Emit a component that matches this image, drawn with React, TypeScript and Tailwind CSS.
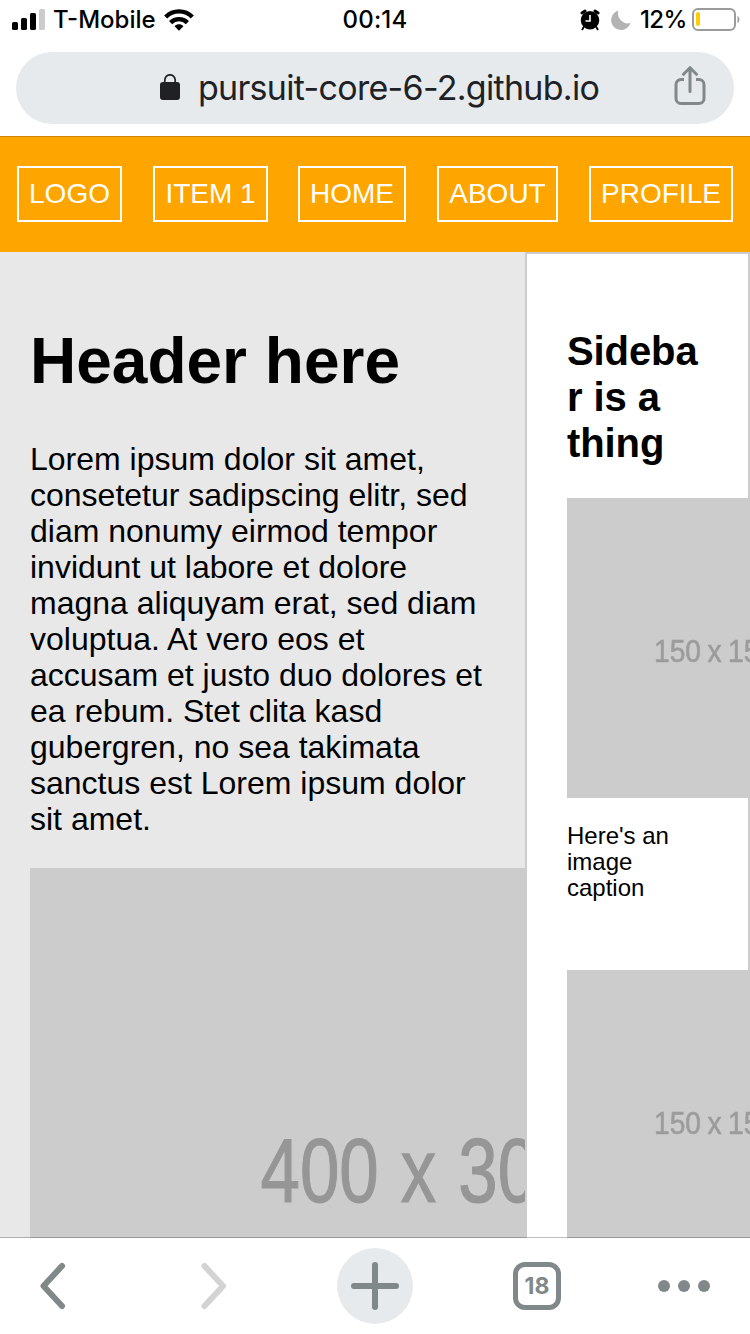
import React from "react";

const NAV_ITEMS = [
  { label: "LOGO", width: "w-[105px]", gap: "" },
  { label: "ITEM 1", width: "w-[115px]", gap: "ml-[31px]" },
  { label: "HOME", width: "w-[108px]", gap: "ml-[30px]" },
  { label: "ABOUT", width: "w-[121px]", gap: "ml-[31px]" },
  { label: "PROFILE", width: "w-[144px]", gap: "ml-[31px]" },
];

const PARAGRAPH = [
  "Lorem ipsum dolor sit amet,",
  "consetetur sadipscing elitr, sed",
  "diam nonumy eirmod tempor",
  "invidunt ut labore et dolore",
  "magna aliquyam erat, sed diam",
  "voluptua. At vero eos et",
  "accusam et justo duo dolores et",
  "ea rebum. Stet clita kasd",
  "gubergren, no sea takimata",
  "sanctus est Lorem ipsum dolor",
  "sit amet.",
];

function StatusBar() {
  return (
    <div className="grid h-10 grid-cols-[1fr_auto_1fr] items-center pl-3 pr-[10px] text-[24px] leading-10 font-medium text-black">
      <div className="flex items-center">
        <svg width="34" height="22" viewBox="0 0 34 22" className="shrink-0">
          <rect x="0" y="13" width="6" height="8" rx="1.6" />
          <rect x="9" y="9" width="6" height="12" rx="1.6" />
          <rect x="18" y="4" width="6" height="17" rx="1.6" />
          <rect x="27" y="0" width="6" height="21" rx="1.6" fill="#cccccc" />
        </svg>
        <span className="ml-[7px] w-[105px] whitespace-nowrap">T-Mobile</span>
        <svg width="30" height="22" viewBox="0 0 30 22" className="ml-[6px] shrink-0" fill="none" stroke="#000" strokeWidth="4.400">
          <path d="M1.700 8C9 0.500 21 0.500 28.300 8" />
          <path d="M6.600 13.600c4.700-4.700 12.100-4.700 16.800 0" />
          <path d="M10.600 17.300c2.500-2.600 6.300-2.600 8.800 0L15 21.800z" fill="#000" stroke="none" />
        </svg>
      </div>
      <span className="-ml-[2px] tracking-[0.2px]">00:14</span>
      <div className="flex items-center justify-end">
        <svg width="20" height="22" viewBox="0 0 20 22" className="shrink-0">
          <circle cx="10" cy="11.300" r="9.200" />
          <path d="M2 4 5 2M18 4 15 2" stroke="#000" strokeWidth="3" strokeLinecap="round" />
          <path d="M4 17.500 2 21M16 17.500l2 3.500" stroke="#000" strokeWidth="1.800" />
          <path d="M10 6V12H5.500" fill="none" stroke="#fff" strokeWidth="1.600" />
        </svg>
        <svg width="20" height="20" viewBox="0 0 20 20" className="ml-[11px] shrink-0">
          <path d="M7.500 0.500a9.900 9.900 0 1 0 12 12.500A9.800 9.800 0 0 1 7.500 0.500z" fill="#b3b3b3" />
        </svg>
        <span className="ml-[9px] w-[52px] whitespace-nowrap tracking-[-0.6px]">12%</span>
        <svg width="48" height="24" viewBox="0 0 48 24" className="shrink-0">
          <rect x="1" y="1" width="42" height="21" rx="5" fill="#fff" stroke="#9b9b9b" strokeWidth="2" />
          <rect x="4" y="4" width="4" height="14" rx="2" fill="#ffcc00" />
          <path d="M45.500 8c2.500 1 2.500 6 0 7z" fill="#9b9b9b" />
        </svg>
      </div>
    </div>
  );
}

function AddressBar() {
  return (
    <div className="mx-4 mt-3 flex h-[72px] items-center rounded-full bg-[#e6eaed] pl-[144px] pr-[28px]">
      <svg width="20" height="27" viewBox="0 0 20 27" fill="#202124" className="mb-px shrink-0">
        <rect y="8" width="20" height="18" rx="3" />
        <path d="M4.800 9V6a5.200 5.200 0 0 1 10.400 0v3" fill="none" stroke="#202124" strokeWidth="1.700" />
      </svg>
      <span className="ml-[18px] whitespace-nowrap text-[34px] leading-[72px] tracking-[-0.7px] text-[#202124]">
        pursuit-core-6-2.github.io
      </span>
      <svg width="32" height="40" viewBox="0 0 32 40" fill="none" stroke="#80888a" strokeWidth="3" strokeLinecap="round" className="mb-[5px] ml-auto shrink-0">
        <path d="M10 13.500H7a5 5 0 0 0-5 5v14a5 5 0 0 0 5 5h18a5 5 0 0 0 5-5v-14a5 5 0 0 0-5-5h-3" strokeLinecap="butt" />
        <path d="M16 25.500V2M9.500 8.300 16 1.800l6.500 6.500" />
      </svg>
    </div>
  );
}

function SidebarImage() {
  return (
    <svg width="300" height="300" viewBox="0 0 300 300" className="block shrink-0">
      <rect width="300" height="300" fill="#cccccc" />
      <text x="87" y="164" fontSize="31" textLength="121" lengthAdjust="spacingAndGlyphs" fill="#9c9c9c" stroke="#9c9c9c" strokeWidth="0.600" className="blur-[0.5px] [word-spacing:-1.500px]">
        150 x 150
      </text>
    </svg>
  );
}

function Page() {
  return (
    <div className="flex h-[1102px] flex-col overflow-hidden font-['Liberation_Sans',Arial,sans-serif] text-black">
      <nav className="flex h-[116px] shrink-0 items-center bg-[#ffa500] pl-[17px]">
        {NAV_ITEMS.map((item) => (
          <a key={item.label} className={`flex h-14 shrink-0 items-center justify-center border-2 border-white text-[28px] whitespace-nowrap text-white ${item.width} ${item.gap}`}>
            {item.label}
          </a>
        ))}
      </nav>
      <div className="flex min-h-0 flex-1 overflow-hidden">
        <main className="w-[525px] shrink-0 overflow-hidden bg-[#e8e8e8] pt-[72px] pl-[30px]">
          <h1 className="text-[64px] leading-[74px] font-bold">Header here</h1>
          <p className="mt-[43px] text-[32px] leading-9 whitespace-nowrap">
            {PARAGRAPH.map((line) => (
              <span key={line} className="block">{line}</span>
            ))}
          </p>
          <svg width="800" height="600" viewBox="0 0 800 600" className="mt-[31px] block">
            <rect width="800" height="600" fill="#cccccc" />
            <text x="230.500" y="333.500" fontSize="90" textLength="316" lengthAdjust="spacingAndGlyphs" fill="#969696" stroke="#969696" strokeWidth="1.200" className="blur-[0.7px] [word-spacing:3px]">
              400 x 300
            </text>
          </svg>
        </main>
        <aside className="h-[1400px] w-[225px] shrink-0 border-2 border-[#cccccc] bg-white pt-[74px] pl-10">
          <h2 className="text-[40px] leading-[46px] font-bold tracking-[-0.100px]">
            Sideba<br />r is a<br />thing
          </h2>
          <div className="mt-[32px]"><SidebarImage /></div>
          <p className="mt-[25px] mb-[69px] text-[24px] leading-[26px] whitespace-nowrap">
            Here's an<br />image<br />caption
          </p>
          <SidebarImage />
        </aside>
      </div>
    </div>
  );
}

function Toolbar() {
  return (
    <div className="relative -mt-px flex h-[98px] items-start border-t border-black/25 bg-white bg-clip-padding pt-[10px] text-[#80888a]">
      <div className="ml-[39px] flex h-[76px] w-[27px] items-center">
        <svg width="27" height="48" viewBox="0 0 27 48" fill="none" stroke="#80888a" strokeWidth="6" strokeLinecap="round" strokeLinejoin="round">
          <path d="M23 4 4.500 24 23 44" />
        </svg>
      </div>
      <div className="ml-[134px] flex h-[76px] w-[27px] items-center">
        <svg width="27" height="48" viewBox="0 0 27 48" fill="none" stroke="#d3d3d3" strokeWidth="6" strokeLinecap="round" strokeLinejoin="round">
          <path d="M4.500 4 23 24 4.500 44" />
        </svg>
      </div>
      <div className="ml-[110px] flex size-[76px] items-center justify-center rounded-full bg-[#e6eaed]">
        <svg width="48" height="48" viewBox="0 0 48 48" stroke="#80888a" strokeWidth="6" strokeLinecap="round">
          <path d="M24 3v42M3 24h42" />
        </svg>
      </div>
      <div className="ml-[100px] flex h-[76px] items-center">
        <div className="flex size-12 items-center justify-center rounded-[12px] border-5 border-[#80888a] text-[23px] leading-none font-bold">18</div>
      </div>
      <div className="ml-[97px] flex h-[76px] items-center gap-2">
        <span className="size-3 rounded-full bg-[#80888a]" />
        <span className="size-3 rounded-full bg-[#80888a]" />
        <span className="size-3 rounded-full bg-[#80888a]" />
      </div>
    </div>
  );
}

export default function App() {
  return (
    <div className="h-[1334px] w-[750px] overflow-hidden bg-white font-['Inter',sans-serif]">
      <header className="relative -mb-px h-[137px] border-b border-black/20 bg-white bg-clip-padding">
        <StatusBar />
        <AddressBar />
      </header>
      <Page />
      <Toolbar />
    </div>
  );
}
